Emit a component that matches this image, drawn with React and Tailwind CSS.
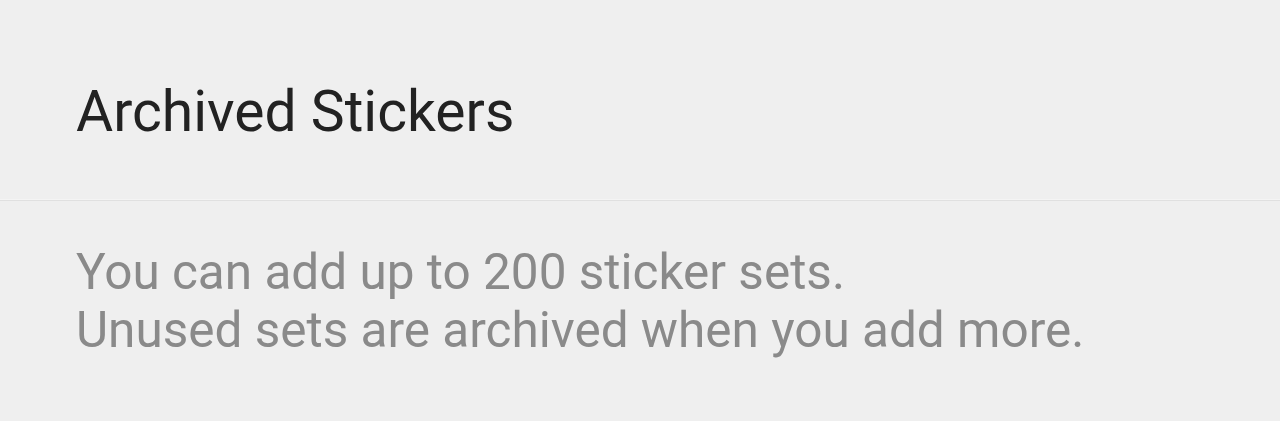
import React from 'react';

export default function App() {
  return (
    <div className="w-[1280px] h-[421px] bg-[#efefef] font-['Roboto',sans-serif] overflow-hidden">
      <div className="h-[199px] pl-[76px] pt-[83px]">
        <h1 className="text-[57px] leading-none text-[#222222]">Archived Stickers</h1>
      </div>
      <div className="h-[2px] bg-[#e0e0e0] border-t border-[#f4f4f4]"></div>
      <div className="pl-[76px] pt-[42px] text-[49.5px] leading-[58px] text-[#8a8a8a]">
        <p>You can add up to 200 sticker sets.</p>
        <p>Unused sets are archived when you add more.</p>
      </div>
    </div>
  );
}
